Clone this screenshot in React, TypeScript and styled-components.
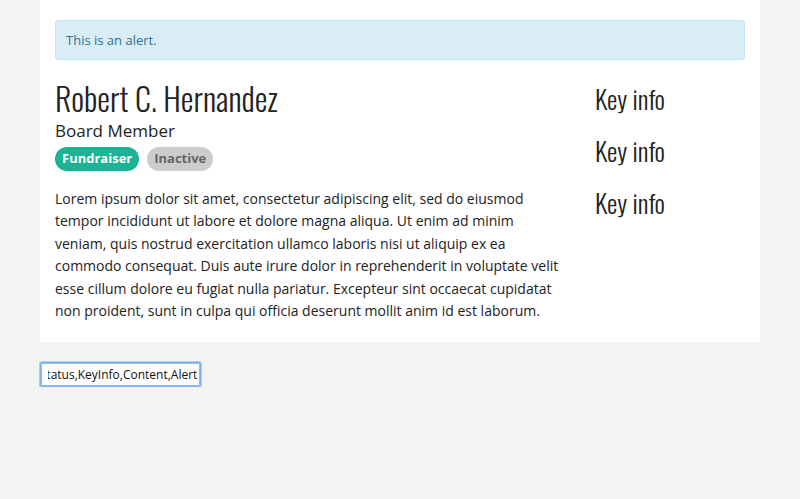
import React, { useEffect, useRef, useState } from "react";
import styled, { createGlobalStyle } from "styled-components";

const GlobalStyle = createGlobalStyle`
  *, *::before, *::after { box-sizing: border-box; }
  body {
    margin: 0;
    background: #f3f3f3;
    color: #222;
    font-family: "Open Sans", sans-serif;
    font-size: 14px;
  }
`;

const Page = styled.div`
  padding: 0 40px;
`;

const Card = styled.main`
  padding: 20px 0;
  background: #fff;
`;

const Alert = styled.div`
  padding: 10px;
  margin: 0 15px 20px;
  border: 1px solid #bce8f1;
  border-radius: 3px;
  background: #d9edf7;
  color: #31708f;
  font-size: 13px;
  line-height: 18px;
`;

const Columns = styled.div`
  display: grid;
  grid-template-columns: 3fr 1fr;

  > * {
    padding: 0 15px;
  }
`;

const Name = styled.h1`
  margin: 0;
  font-family: Oswald, "Open Sans", sans-serif;
  font-size: 32px;
  font-weight: 300;
  line-height: 36px;
`;

const Role = styled.p`
  margin: 4px 0 0;
  font-size: 17px;
  line-height: 22px;
`;

const Tags = styled.div`
  display: flex;
  gap: 8px;
  margin-top: 5px;
`;

const Tag = styled.span<{ $active?: boolean }>`
  padding: 0 7px 1px;
  border-radius: 12px;
  background: ${(p) => (p.$active ? "#1ab394" : "#ccc")};
  color: ${(p) => (p.$active ? "#fff" : "#666")};
  font-size: 13px;
  font-weight: 700;
  line-height: 23px;
`;

const Bio = styled.p`
  margin: 17px 0 0;
  font-size: 14px;
  line-height: 1.6;
`;

const KeyInfo = styled.h2`
  margin: 0 0 14px;
  font-family: Oswald, "Open Sans", sans-serif;
  font-size: 26px;
  font-weight: 300;
  line-height: 38px;
`;

const Field = styled.input`
  width: 161px;
  height: 25px;
  margin-top: 20px;
  padding: 0 3px 0 7px;
  border: 1px solid #7eb1eb;
  border-radius: 2px;
  outline: none;
  box-shadow: 0 0 0 1px #a9cff5, inset 0 0 0 1px #8fbdf0;
  background: #fff;
  color: #111;
  font: 12px "Open Sans", sans-serif;
`;

export default function App() {
  const ref = useRef<HTMLInputElement>(null);
  const [value, setValue] = useState("Title,Status,KeyInfo,Content,Alert");
  useEffect(() => {
    if (ref.current) ref.current.scrollLeft = ref.current.scrollWidth;
  }, []);
  return (
    <>
      <GlobalStyle />
      <Page>
        <Card>
          <Alert role="alert">This is an alert.</Alert>
          <Columns>
            <section>
              <Name>Robert C. Hernandez</Name>
              <Role>Board Member</Role>
              <Tags>
                <Tag $active>Fundraiser</Tag>
                <Tag>Inactive</Tag>
              </Tags>
              <Bio>
                Lorem ipsum dolor sit amet, consectetur adipiscing elit, sed do eiusmod tempor
                incididunt ut labore et dolore magna aliqua. Ut enim ad minim veniam, quis nostrud
                exercitation ullamco laboris nisi ut aliquip ex ea commodo consequat. Duis aute irure
                dolor in reprehenderit in voluptate velit esse cillum dolore eu fugiat nulla
                pariatur. Excepteur sint occaecat cupidatat non proident, sunt in culpa qui officia
                deserunt mollit anim id est laborum.
              </Bio>
            </section>
            <aside>
              <KeyInfo>Key info</KeyInfo>
              <KeyInfo>Key info</KeyInfo>
              <KeyInfo>Key info</KeyInfo>
            </aside>
          </Columns>
        </Card>
        <Field ref={ref} aria-label="Components" value={value} onChange={(e) => setValue(e.target.value)} />
      </Page>
    </>
  );
}
